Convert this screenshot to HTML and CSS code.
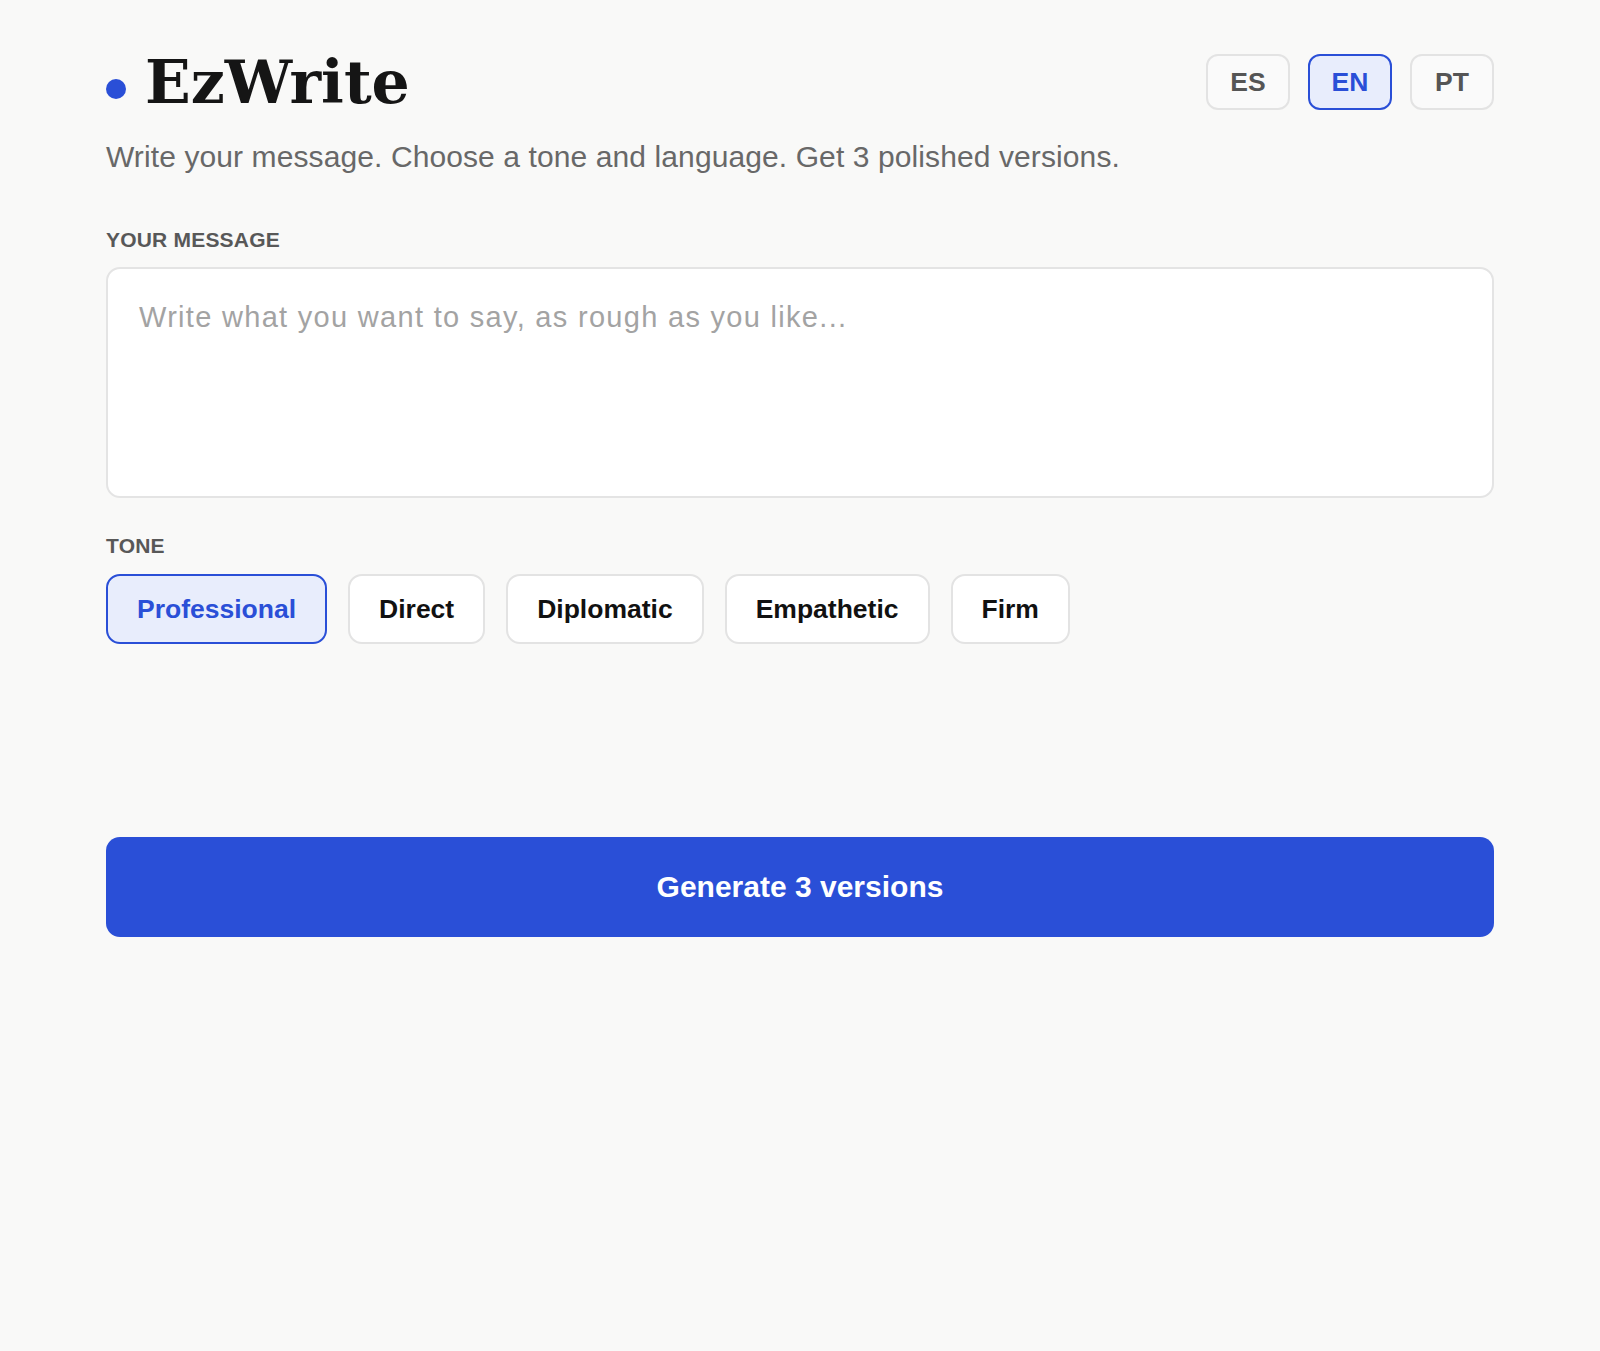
FILE: index.html
```html
<!DOCTYPE html>
<html>
<head>
    <title>EzWrite</title>
    <link rel="stylesheet" href="styles.css">
</head>
<body>
    <div class="container">
        <div class="header">
            <div class="brand">
                <span class="brand-dot"></span>
                <h1>EzWrite</h1>
            </div>
            <div class="lang-switch">
                <button class="lang-btn">ES</button>
                <button class="lang-btn active">EN</button>
                <button class="lang-btn">PT</button>
            </div>
        </div>
        <p class="subtitle">Write your message. Choose a tone and language. Get 3 polished versions.</p>

        <label class="field-label" for="message">Your message</label>
        <textarea id="message" class="message-input" placeholder="Write what you want to say, as rough as you like..."></textarea>

        <div class="field-label tone-label">Tone</div>
        <div class="tone-list">
            <button class="tone-btn active">Professional</button>
            <button class="tone-btn">Direct</button>
            <button class="tone-btn">Diplomatic</button>
            <button class="tone-btn">Empathetic</button>
            <button class="tone-btn">Firm</button>
        </div>

        <button class="generate-btn">Generate 3 versions</button>
    </div>
</body>
</html>
```

FILE: styles.css
```css
* {
    margin: 0;
    padding: 0;
    box-sizing: border-box;
    font-family: "Liberation Sans", Arial, sans-serif;
}

body {
    background: #f9f9f8;
    color: #111;
    min-height: 100vh;
}

.container {
    max-width: 1388px;
    margin: 0 auto;
    padding-top: 49px;
}

.header {
    display: flex;
    justify-content: space-between;
    align-items: center;
}

.brand {
    display: flex;
    align-items: center;
    gap: 19px;
}

.brand-dot {
    width: 20px;
    height: 20px;
    border-radius: 50%;
    background: #2a4fd7;
    margin-top: 13px;
}

.brand h1 {
    font-family: "DejaVu Serif", Georgia, serif;
    font-size: 60px;
    line-height: 66px;
    font-weight: bold;
    color: #151515;
}

.lang-switch {
    display: flex;
    gap: 18px;
}

.lang-btn {
    width: 84px;
    height: 56px;
    border: 2px solid #e3e3e3;
    border-radius: 12px;
    background: #fafafa;
    color: #555;
    font-size: 26.5px;
    font-weight: bold;
    cursor: pointer;
}

.lang-btn.active {
    border-color: #2a4fd7;
    background: #e8edfc;
    color: #2a4fd7;
}

.subtitle {
    margin-top: 22px;
    font-size: 30px;
    line-height: 40px;
    letter-spacing: 0.1px;
    color: #686868;
}

.field-label {
    display: block;
    margin-top: 51px;
    font-size: 21px;
    line-height: 24px;
    font-weight: bold;
    letter-spacing: 0.2px;
    text-transform: uppercase;
    color: #585858;
}

.message-input {
    display: block;
    width: 100%;
    height: 231px;
    margin-top: 15px;
    padding: 27px 31px;
    border: 2px solid #e4e4e4;
    border-radius: 14px;
    background: #fff;
    font-size: 29px;
    line-height: 42px;
    letter-spacing: 1.3px;
    color: #222;
    resize: none;
    outline: none;
}

.message-input::placeholder {
    color: #a3a3a3;
}

.tone-label {
    margin-top: 36px;
}

.tone-list {
    display: flex;
    gap: 21px;
    margin-top: 16px;
}

.tone-btn {
    height: 70px;
    padding: 0 29px;
    border: 2px solid #e3e3e3;
    border-radius: 14px;
    background: #fff;
    color: #111;
    font-size: 26.5px;
    font-weight: bold;
    cursor: pointer;
}

.tone-btn.active {
    border-color: #2a4fd7;
    background: #e8edfc;
    color: #2a4fd7;
}

.generate-btn {
    display: block;
    width: 100%;
    height: 100px;
    margin-top: 193px;
    border: none;
    border-radius: 14px;
    background: #2a4fd7;
    color: #fff;
    font-size: 30px;
    font-weight: bold;
    cursor: pointer;
}
```
